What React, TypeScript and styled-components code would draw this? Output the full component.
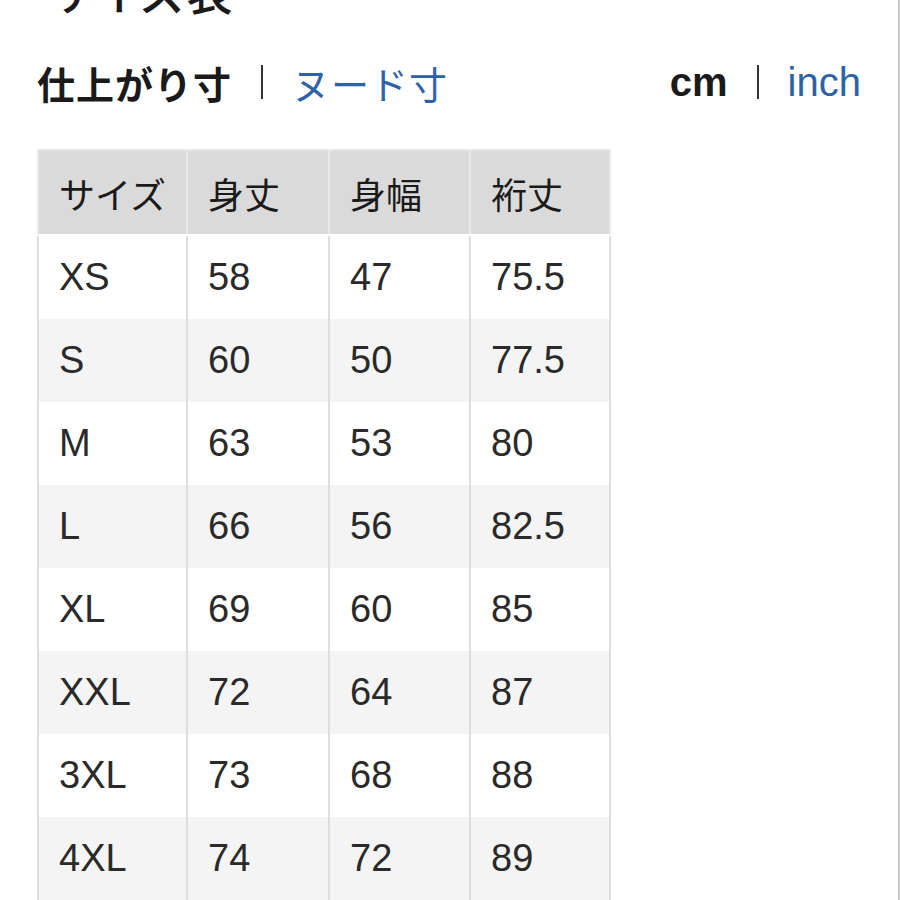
import styled, { createGlobalStyle } from "styled-components";

const rows = [
  ["XS", "58", "47", "75.5"],
  ["S", "60", "50", "77.5"],
  ["M", "63", "53", "80"],
  ["L", "66", "56", "82.5"],
  ["XL", "69", "60", "85"],
  ["XXL", "72", "64", "87"],
  ["3XL", "73", "68", "88"],
  ["4XL", "74", "72", "89"],
];

const headers = ["サイズ", "身丈", "身幅", "裄丈"];
const widths = [149, 142, 141, 140];

function App() {
  return (
    <Page>
      <GlobalStyle />
      <Title>サイズ表</Title>

      <ToggleBar>
        <ToggleGroup>
          <ToggleItem $active>仕上がり寸</ToggleItem>
          <Divider />
          <ToggleItem>ヌード寸</ToggleItem>
        </ToggleGroup>
        <ToggleGroup>
          <UnitItem $active>cm</UnitItem>
          <Divider />
          <UnitItem>inch</UnitItem>
        </ToggleGroup>
      </ToggleBar>

      <SizeTable>
        <colgroup>
          {widths.map((w, i) => (
            <col key={i} style={{ width: w }} />
          ))}
        </colgroup>
        <thead>
          <tr>
            {headers.map((h) => (
              <HeadCell key={h}>{h}</HeadCell>
            ))}
          </tr>
        </thead>
        <tbody>
          {rows.map((row, i) => (
            <BodyRow key={row[0]} $striped={i % 2 === 1}>
              {row.map((v, j) => (
                <BodyCell key={j}>{v}</BodyCell>
              ))}
            </BodyRow>
          ))}
        </tbody>
      </SizeTable>
    </Page>
  );
}

const GlobalStyle = createGlobalStyle`
  html, body {
    margin: 0;
    padding: 0;
    background: #ffffff;
    overflow: hidden;
  }
  body {
    font-family: "Liberation Sans", "Noto Sans CJK JP", sans-serif;
    color: #1a1a1a;
  }
`;

const Page = styled.div`
  width: 900px;
  height: 900px;
  border-right: 2px solid #c8c8c8;
  padding-left: 37px;
  box-sizing: border-box;
  overflow: hidden;
`;

const Title = styled.h1`
  margin: -33px 0 0 10px;
  font-family: "Noto Sans CJK JP", sans-serif;
  font-size: 46px;
  font-weight: 500;
  line-height: 46px;
  letter-spacing: 1px;
`;

const ToggleBar = styled.div`
  display: flex;
  justify-content: space-between;
  align-items: center;
  margin-top: 47px;
  padding-right: 37px;
  height: 44px;
`;

const ToggleGroup = styled.div`
  display: flex;
  align-items: center;
`;

const ToggleItem = styled.span<{ $active?: boolean }>`
  font-family: "Noto Sans CJK JP", sans-serif;
  font-size: 38px;
  font-weight: ${(p) => (p.$active ? 700 : 400)};
  color: ${(p) => (p.$active ? "#1a1a1a" : "#2e62a6")};
  letter-spacing: 1px;
`;

const UnitItem = styled.span<{ $active?: boolean }>`
  font-family: "Liberation Sans", sans-serif;
  font-size: 40px;
  font-weight: ${(p) => (p.$active ? 700 : 400)};
  color: ${(p) => (p.$active ? "#1a1a1a" : "#2e62a6")};
`;

const Divider = styled.span`
  display: inline-block;
  width: 2px;
  height: 34px;
  background: #333333;
  margin: 0 29px;
`;

const SizeTable = styled.table`
  margin-top: 45px;
  border-collapse: collapse;
  table-layout: fixed;
  width: 574px;
  border-top: 2px solid #e6e6e6;
`;

const HeadCell = styled.th`
  height: 83px;
  padding: 0 0 0 20px;
  background: #dadada;
  border-left: 2px solid #e8e8e8;
  border-right: 2px solid #e8e8e8;
  border-bottom: 2px solid #ffffff;
  text-align: left;
  font-family: "Noto Sans CJK JP", sans-serif;
  font-size: 36px;
  font-weight: 400;
  color: #1a1a1a;
`;

const BodyRow = styled.tr<{ $striped: boolean }>`
  background: ${(p) => (p.$striped ? "#f4f4f4" : "#ffffff")};
`;

const BodyCell = styled.td`
  height: 83px;
  padding: 0 0 0 20px;
  border-left: 2px solid #dedede;
  border-right: 2px solid #dedede;
  font-family: "Liberation Sans", "Noto Sans CJK JP", sans-serif;
  font-size: 38px;
  font-weight: 400;
  color: #2a2a2a;
`;

export default App;
